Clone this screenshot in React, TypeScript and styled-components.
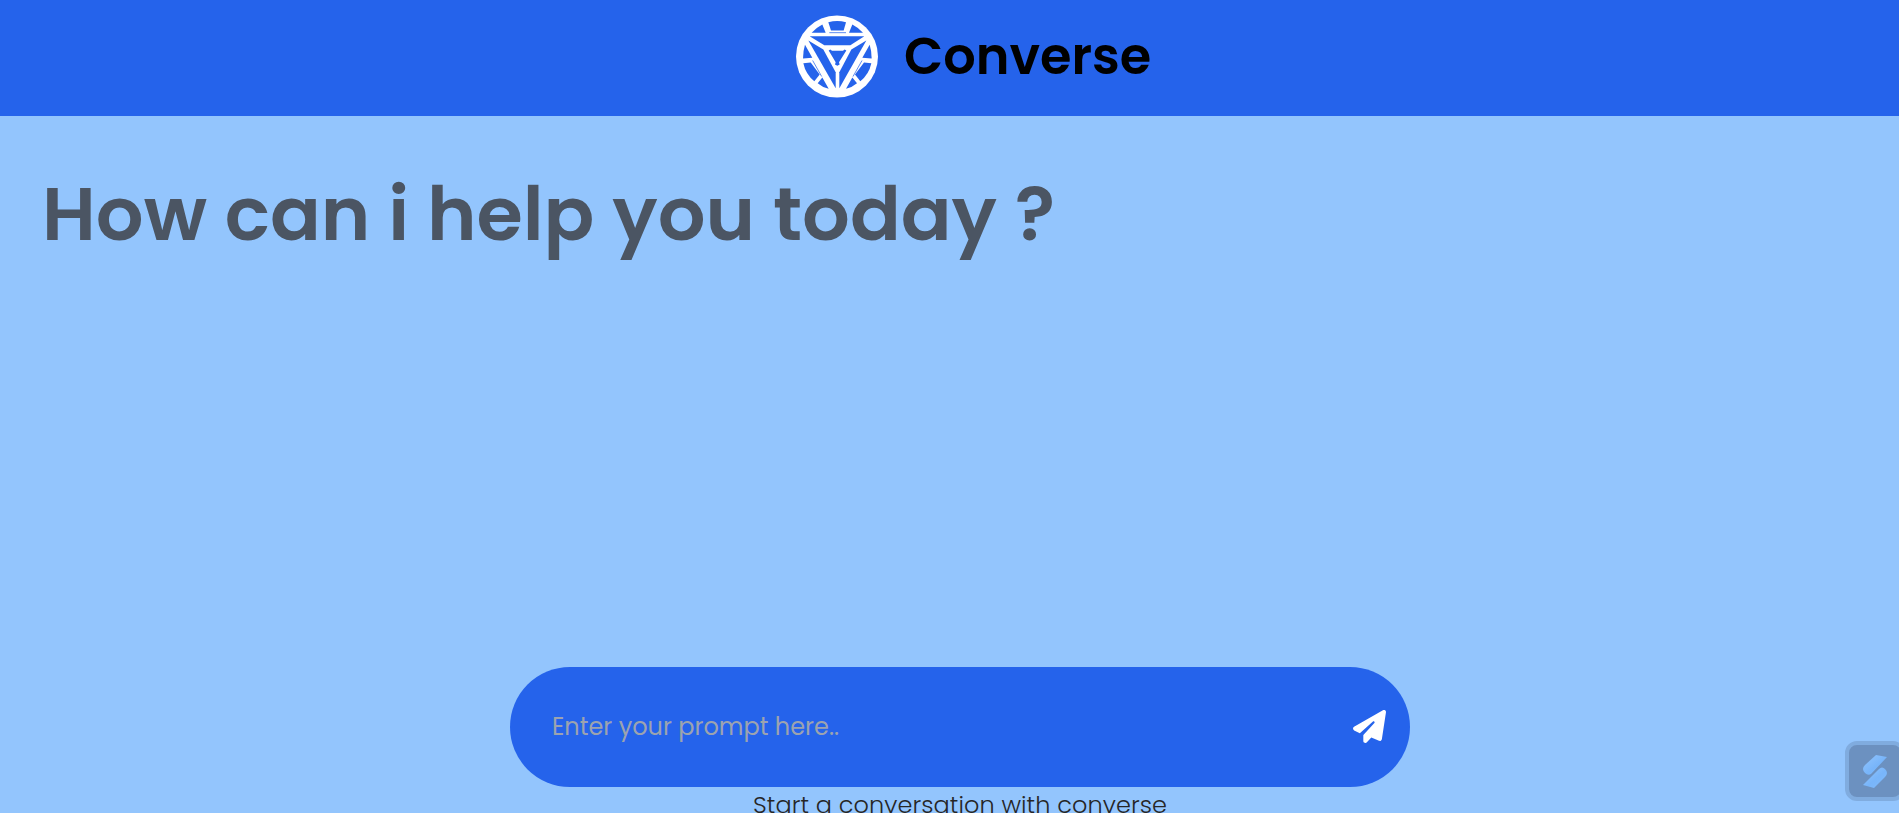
import React from "react";
import styled, { createGlobalStyle } from "styled-components";
import { FaPaperPlane } from "react-icons/fa6";

const GlobalStyle = createGlobalStyle`
  * { box-sizing: border-box; }
  html, body { margin: 0; height: 100%; overflow: hidden; }
  body {
    background: #93c5fd;
    font-family: Poppins, Inter, "Liberation Sans", sans-serif;
  }
`;

const Page = styled.div`
  display: flex;
  flex-direction: column;
  height: 813px;
  overflow: hidden;
`;

const Header = styled.header`
  display: flex;
  justify-content: center;
  align-items: flex-start;
  gap: 26px;
  flex: none;
  height: 116px;
  padding: 15px 0 0 50px;
  background: #2563eb;
`;

const Brand = styled.h1`
  margin: 0;
  width: 249px;
  font-size: 51px;
  line-height: 82px;
  font-weight: 600;
  white-space: nowrap;
  color: #000;
`;

const Conversation = styled.main`
  flex: none;
  height: 551px;
  padding: 52px 0 0 42px;
`;

const Greeting = styled.h2`
  margin: 0;
  font-size: 75px;
  line-height: 92px;
  font-weight: 600;
  white-space: nowrap;
  color: #4b5563;
`;

const Composer = styled.footer`
  display: flex;
  flex-direction: column;
  align-items: center;
  padding-left: 21px;
`;

const PromptBar = styled.form`
  display: flex;
  align-items: center;
  width: 900px;
  height: 120px;
  padding: 0 24px 0 42px;
  border-radius: 60px;
  background: #2563eb;
`;

const PromptInput = styled.input`
  flex: 1;
  min-width: 0;
  padding: 0 0 2px;
  border: 0;
  outline: 0;
  background: transparent;
  font: inherit;
  font-size: 24px;
  color: #fff;
  &::placeholder { color: #9ca3af; opacity: 1; }
`;

const SendButton = styled.button`
  display: flex;
  padding: 0 0 1px;
  border: 0;
  background: transparent;
  color: #fff;
`;

const Caption = styled.p`
  margin: 0;
  font-size: 24px;
  line-height: 36px;
  font-weight: 300;
  letter-spacing: 0.08px;
  white-space: nowrap;
  color: #262626;
`;

const Widget = styled.div`
  position: absolute;
  right: -6px;
  bottom: 12px;
  display: flex;
  align-items: center;
  justify-content: center;
  width: 60px;
  height: 60px;
  border: 4px solid #80acdf;
  border-radius: 12px;
  background: #6c91c0;
`;

const Logo = () => (
  <svg width="82" height="83" viewBox="48 45.5 246 249">
    <circle cx="171" cy="170" r="123" fill="#fff" />
    <g fill="#2563eb">
      <path d="M145 67Q172 60 198 67L191 92H153Z" />
      <path d="M95 99Q109 83 127 74L137 99Z" />
      <path d="M249 99Q235 83 217 74L207 99Z" />
      <path d="M89 109H253L211 136H133Z" />
      <path d="M75 135L97 174L69 176Q69 154 75 135Z" />
      <path d="M269 135L247 174L275 176Q275 154 269 135Z" />
      <path d="M70 190L92 188L119 224L103 244Q77 223 70 190Z" />
      <path d="M274 190L252 188L225 224L241 244Q267 223 274 190Z" />
      <path d="M113 250L127 233L146 267Q127 262 113 250Z" />
      <path d="M231 250L217 233L198 267Q217 262 231 250Z" />
      <path d="M85 122L130 149L167 217V265Z" />
      <path d="M259 122L214 149L178 217V265Z" />
      <path d="M146 152L151 149L156 153H189L194 149L199 152L177 187L179 194L172 198L165 194L167 187Z" />
    </g>
    <path d="M98 182L125 230M246 182L219 230M148 98.5H198" stroke="#2563eb" strokeWidth="2.2" />
  </svg>
);

const WidgetMark = () => (
  <svg width="26" height="34" viewBox="0 0 26 34">
    <defs>
      <linearGradient id="mark" x1="0" y1="0" x2="1" y2="1">
        <stop offset="0" stopColor="#93c5fd" />
        <stop offset="0.55" stopColor="#78b5fa" />
        <stop offset="1" stopColor="#80bbfc" />
      </linearGradient>
    </defs>
    <path d="M14 1L25 3L9 20Q6 22 3 19Q-1 15 3 11Z" fill="url(#mark)" />
    <path d="M12 34L1 31L17 15Q20 12 23 15Q27 19 23 23Z" fill="url(#mark)" />
  </svg>
);

export default function App() {
  return (
    <Page>
      <GlobalStyle />
      <Header>
        <Logo />
        <Brand>Converse</Brand>
      </Header>
      <Conversation>
        <Greeting>How can i help you today ?</Greeting>
      </Conversation>
      <Composer>
        <PromptBar onSubmit={(event) => event.preventDefault()}>
          <PromptInput placeholder="Enter your prompt here.." />
          <SendButton aria-label="Send"><FaPaperPlane size={33} /></SendButton>
        </PromptBar>
        <Caption>Start a conversation with converse</Caption>
      </Composer>
      <Widget><WidgetMark /></Widget>
    </Page>
  );
}
